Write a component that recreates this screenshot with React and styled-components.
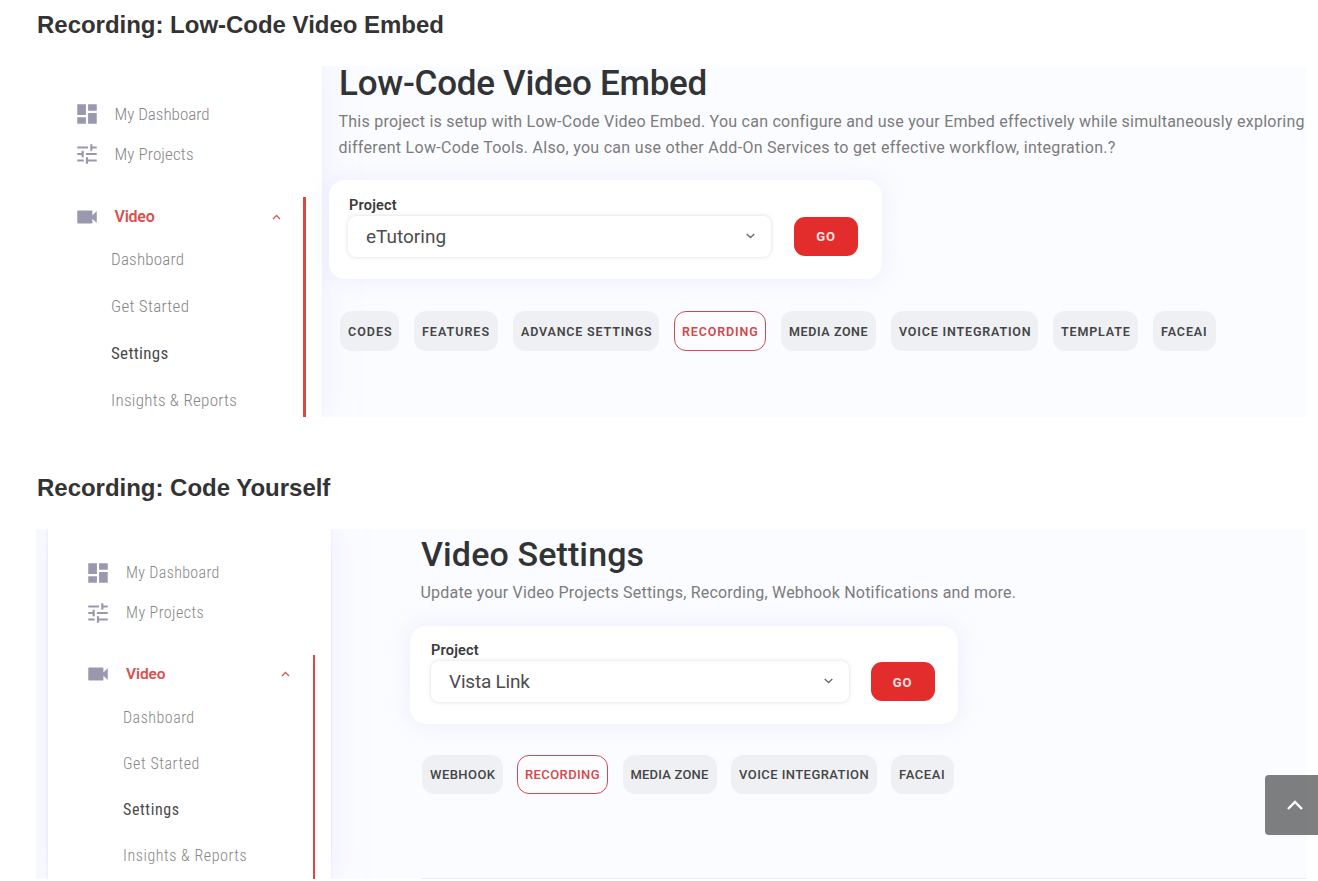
import React from 'react';
import styled, { createGlobalStyle, ThemeProvider } from 'styled-components';
import { MdDashboard, MdTune, MdVideocam } from 'react-icons/md';

const GlobalStyle = createGlobalStyle`
  * { box-sizing: border-box; }
  body { margin: 0; background: #fff; overflow: hidden; }
  h2, h3, p { margin: 0; }
`;

const Page = styled.main`
  height: 881px;
  padding: 9px 11px 0 37px;
  font-family: Roboto, "Liberation Sans", sans-serif;
  overflow: hidden;
`;

const SectionHeading = styled.h2`
  height: 32px;
  font: 700 24px/32px "Liberation Sans", Arial, sans-serif;
  letter-spacing: -0.02px;
  color: #333;
`;

const Shot = styled.section`
  display: flex;
  height: ${p => p.theme.shotHeight}px;
  margin: ${p => p.theme.shotMargin};
  overflow: hidden;
  background: #fbfcff;
`;

const Sidebar = styled.aside`
  flex: none;
  width: ${p => p.theme.sidebarWidth}px;
  margin-left: ${p => p.theme.sidebarOffset}px;
  padding-top: ${p => p.theme.sidebarTop}px;
  background: #fff;
  box-shadow: 0 0 2px ${p => p.theme.sidebarEdge}, 0 0 28px rgba(225, 226, 255, 0.5);
`;

const NavRow = styled.div`
  display: flex;
  align-items: center;
  height: ${p => p.theme.navRow}px;
  padding-left: ${p => p.theme.navIndent}px;
`;

const NavIcon = styled.span`
  display: flex;
  width: 26px;
  margin-right: 15px;
  color: #9a98ae;
  svg { width: 26px; height: 26px; }
`;

const NavText = styled.span`
  font-size: ${p => p.theme.navSize}px;
  font-weight: ${p => (p.$active ? 400 : 300)};
  font-stretch: 75%;
  line-height: 24px;
  letter-spacing: ${p => p.$track || 0}px;
  color: ${p => (p.$active ? '#4a4a4a' : '#868686')};
  white-space: nowrap;
`;

const VideoGroup = styled.div`
  height: 300px;
  margin: ${p => p.theme.groupGap}px ${p => p.theme.groupRight}px 0 0;
  border-right: ${p => p.theme.groupLine} solid #dc4643;
`;

const VideoText = styled.span`
  font-size: ${p => p.theme.videoSize}px;
  font-weight: 600;
  letter-spacing: ${p => p.theme.videoTrack}px;
  line-height: 24px;
  color: #d9504e;
`;

const VideoChevron = styled.svg`
  width: 9px;
  height: 6px;
  margin: 0 ${p => p.theme.chevronRight}px 0 auto;
  fill: none;
  stroke: #d05a58;
  stroke-width: 1.3;
`;

const SubList = styled.div`
  margin-top: ${p => p.theme.subTop}px;
`;

const SubRow = styled.div`
  display: flex;
  align-items: center;
  height: ${p => p.theme.subRow}px;
  padding-left: ${p => p.theme.subIndent}px;
`;

const Content = styled.div`
  flex: 1;
  min-width: 0;
  padding: ${p => p.theme.contentPadding};
`;

const Title = styled.h3`
  padding-left: ${p => p.theme.textIndent}px;
  font-size: ${p => p.theme.titleSize}px;
  font-weight: 500;
  line-height: ${p => p.theme.titleLine}px;
  letter-spacing: ${p => p.theme.titleTrack}px;
  color: #323335;
  white-space: nowrap;
`;

const Intro = styled.p`
  margin-top: ${p => p.theme.introTop}px;
  padding-left: ${p => p.theme.textIndent - 0.5}px;
  font-size: 16px;
  line-height: 26px;
  color: #7b7b7c;
`;

const IntroLine = styled.span`
  display: block;
  letter-spacing: ${p => p.$track}px;
  white-space: nowrap;
`;

const ProjectCard = styled.div`
  display: flex;
  align-items: flex-end;
  gap: ${p => p.theme.cardGap}px;
  width: ${p => p.theme.cardWidth}px;
  height: ${p => p.theme.cardHeight}px;
  margin-top: ${p => p.theme.cardTop}px;
  padding: 0 0 ${p => p.theme.cardBottom}px ${p => p.theme.cardLeft}px;
  border-radius: 16px;
  background: #fff;
  box-shadow: 0 0 22px rgba(214, 217, 255, 0.42);
`;

const Field = styled.label`
  display: flex;
  flex-direction: column;
  width: ${p => p.theme.selectWidth}px;
`;

const FieldLabel = styled.span`
  padding-left: ${p => p.theme.labelIndent}px;
  font-size: 14.5px;
  font-weight: 600;
  line-height: 20px;
  letter-spacing: 0.2px;
  color: #3a3a3b;
`;

const Select = styled.div`
  display: flex;
  align-items: center;
  justify-content: space-between;
  height: 41px;
  padding: 1px 16px 0 18px;
  border-radius: 8px;
  background: #fff;
  box-shadow: 0 0 4px rgba(0, 0, 0, 0.15);
  font-size: 19px;
  letter-spacing: ${p => p.theme.selectTrack}px;
  color: #4c4c4e;
`;

const SelectChevron = styled.svg`
  width: 9px;
  height: 6px;
  margin-top: -2px;
  fill: none;
  stroke: #6d6d6d;
  stroke-width: 1.4;
`;

const GoButton = styled.button`
  width: 64px;
  height: 39px;
  margin: 0 0 ${p => p.theme.goBottom}px;
  padding: 1px 0 0;
  border: 0;
  border-radius: 11px;
  background: #e32d2d;
  font: 700 13px Roboto, sans-serif;
  letter-spacing: 0.8px;
  color: #fbe3e3;
`;

const Tabs = styled.nav`
  display: flex;
  gap: ${p => p.theme.tabGap}px;
  margin-top: ${p => p.theme.tabsTop}px;
  padding-left: ${p => p.theme.tabsIndent}px;
`;

const Tab = styled.span`
  display: flex;
  flex: none;
  align-items: center;
  width: ${p => p.$width}px;
  height: ${p => p.theme.tabHeight}px;
  padding-left: ${p => (p.$active ? 7 : 8)}px;
  border: ${p => (p.$active ? '1px solid #cf4a55' : '0')};
  border-radius: 12px;
  background: ${p => (p.$active ? '#fdfdff' : '#eff0f3')};
  font-size: ${p => p.theme.tabSize}px;
  font-weight: ${p => p.theme.tabWeight};
  letter-spacing: ${p => p.$track}px;
  color: ${p => (p.$active ? '#d8464a' : '#444546')};
  white-space: nowrap;
`;

const NextPanelEdge = styled.div`
  height: 2px;
  margin: ${p => p.theme.edgeTop}px 0 0 11px;
  border-radius: 2px 0 0 0;
  background: #e9ebf2;
`;

const ScrollTop = styled.button`
  position: fixed;
  right: -7px;
  top: 775px;
  display: flex;
  align-items: center;
  width: 60px;
  height: 60px;
  padding: 0 0 0 22px;
  border: 0;
  border-radius: 4px;
  background: rgba(0, 0, 0, 0.5);
  svg { width: 16px; height: 10px; fill: none; stroke: #fff; stroke-width: 2.4; }
`;

const embedTheme = {
  shotHeight: 351, shotMargin: '25px 0 55px', sidebarOffset: 0, sidebarWidth: 285, sidebarTop: 28, sidebarEdge: '#eff0fa',
  navRow: 40, navIndent: 36.5, navSize: 17, groupGap: 23, groupRight: 16, groupLine: '3px',
  videoSize: 16, videoTrack: -0.25, chevronRight: 22, subTop: -2, subRow: 47.2, subIndent: 74,
  contentPadding: '0 0 0 7px', textIndent: 10, titleSize: 35, titleTrack: -0.27, titleLine: 36, introTop: 6.5,
  cardTop: 19.5, cardWidth: 553, cardHeight: 99, cardBottom: 22.5, cardLeft: 19, cardGap: 23, selectWidth: 423, selectTrack: 0,
  labelIndent: 1, goBottom: 1,
  tabsTop: 32, tabsIndent: 11, tabGap: 15, tabHeight: 40, tabSize: 12.5, tabWeight: 600,
};

const codeTheme = {
  shotHeight: 350, shotMargin: '25px 0 0 -1px', sidebarOffset: 12, sidebarWidth: 283, sidebarTop: 24.5, sidebarEdge: '#dfe0ee',
  navRow: 39.5, navIndent: 37, navSize: 16, groupGap: 22, groupRight: 16, groupLine: '2px',
  videoSize: 15.5, videoTrack: -0.1, chevronRight: 23, subTop: 0.5, subRow: 46.2, subIndent: 75,
  contentPadding: '6px 0 0 79px', textIndent: 11, titleSize: 34, titleTrack: 0.12, titleLine: 38, introTop: 6.5,
  cardTop: 20.5, cardWidth: 548, cardHeight: 98, cardBottom: 22.5, cardLeft: 21, cardGap: 22, selectWidth: 417.5, selectTrack: -0.2,
  labelIndent: 0, goBottom: 0.5,
  tabsTop: 31, tabsIndent: 12, tabGap: 14.5, tabHeight: 39, tabSize: 13, tabWeight: 500, edgeTop: 84,
};

const embed = {
  heading: 'Recording: Low-Code Video Embed',
  nav: [['My Dashboard', 0], ['My Projects', 0.12]],
  sub: [['Dashboard', 0.2], ['Get Started', 0.3], ['Settings', 0.3], ['Insights & Reports', 0.28]],
  title: 'Low-Code Video Embed',
  intro: [
    ['This project is setup with Low-Code Video Embed. You can configure and use your Embed effectively while simultaneously exploring', 0.242],
    ['different Low-Code Tools. Also, you can use other Add-On Services to get effective workflow, integration.?', 0.295],
  ],
  project: 'eTutoring',
  tabs: [['CODES', 59, 1], ['FEATURES', 84, 1], ['ADVANCE SETTINGS', 146, 0.82], ['RECORDING', 92, 0.86], ['MEDIA ZONE', 95, 0.6], ['VOICE INTEGRATION', 147, 0.83], ['TEMPLATE', 85, 0.85], ['FACEAI', 63, 0.9]],
};

const code = {
  heading: 'Recording: Code Yourself',
  nav: [['My Dashboard', 0.35], ['My Projects', 0.45]],
  sub: [['Dashboard', 0.5], ['Get Started', 0.58], ['Settings', 0.6], ['Insights & Reports', 0.56]],
  title: 'Video Settings',
  intro: [['Update your Video Projects Settings, Recording, Webhook Notifications and more.', 0.21]],
  project: 'Vista Link',
  tabs: [['WEBHOOK', 80.5, 0.44], ['RECORDING', 91, 0.4], ['MEDIA ZONE', 94, 0.2], ['VOICE INTEGRATION', 145.5, 0.44], ['FACEAI', 62.5, 0.6]],
  edge: true,
};

function ProductShot({ data }) {
  return (
    <Shot>
      <Sidebar>
        <NavRow><NavIcon><MdDashboard /></NavIcon><NavText $track={data.nav[0][1]}>{data.nav[0][0]}</NavText></NavRow>
        <NavRow><NavIcon><MdTune /></NavIcon><NavText $track={data.nav[1][1]}>{data.nav[1][0]}</NavText></NavRow>
        <VideoGroup>
          <NavRow>
            <NavIcon><MdVideocam /></NavIcon>
            <VideoText>Video</VideoText>
            <VideoChevron viewBox="0 0 9 6"><path d="M1 5 4.5 1.5 8 5" /></VideoChevron>
          </NavRow>
          <SubList>
            {data.sub.map(([name, track]) => (
              <SubRow key={name}><NavText $active={name === 'Settings'} $track={track}>{name}</NavText></SubRow>
            ))}
          </SubList>
        </VideoGroup>
      </Sidebar>
      <Content>
        <Title>{data.title}</Title>
        <Intro>{data.intro.map(([line, track]) => <IntroLine key={line} $track={track}>{line}</IntroLine>)}</Intro>
        <ProjectCard>
          <Field>
            <FieldLabel>Project</FieldLabel>
            <Select>
              {data.project}
              <SelectChevron viewBox="0 0 9 6"><path d="M.7 1 4.5 4.6 8.3 1" /></SelectChevron>
            </Select>
          </Field>
          <GoButton>GO</GoButton>
        </ProjectCard>
        <Tabs>
          {data.tabs.map(([name, width, track]) => (
            <Tab key={name} $width={width} $track={track} $active={name === 'RECORDING'}>{name}</Tab>
          ))}
        </Tabs>
        {data.edge && <NextPanelEdge />}
      </Content>
    </Shot>
  );
}

export default function App() {
  return (
    <Page>
      <GlobalStyle />
      <SectionHeading>{embed.heading}</SectionHeading>
      <ThemeProvider theme={embedTheme}><ProductShot data={embed} /></ThemeProvider>
      <SectionHeading>{code.heading}</SectionHeading>
      <ThemeProvider theme={codeTheme}><ProductShot data={code} /></ThemeProvider>
      <ScrollTop aria-label="Scroll to top">
        <svg viewBox="0 0 16 10"><path d="M1 9 8 2l7 7" /></svg>
      </ScrollTop>
    </Page>
  );
}
